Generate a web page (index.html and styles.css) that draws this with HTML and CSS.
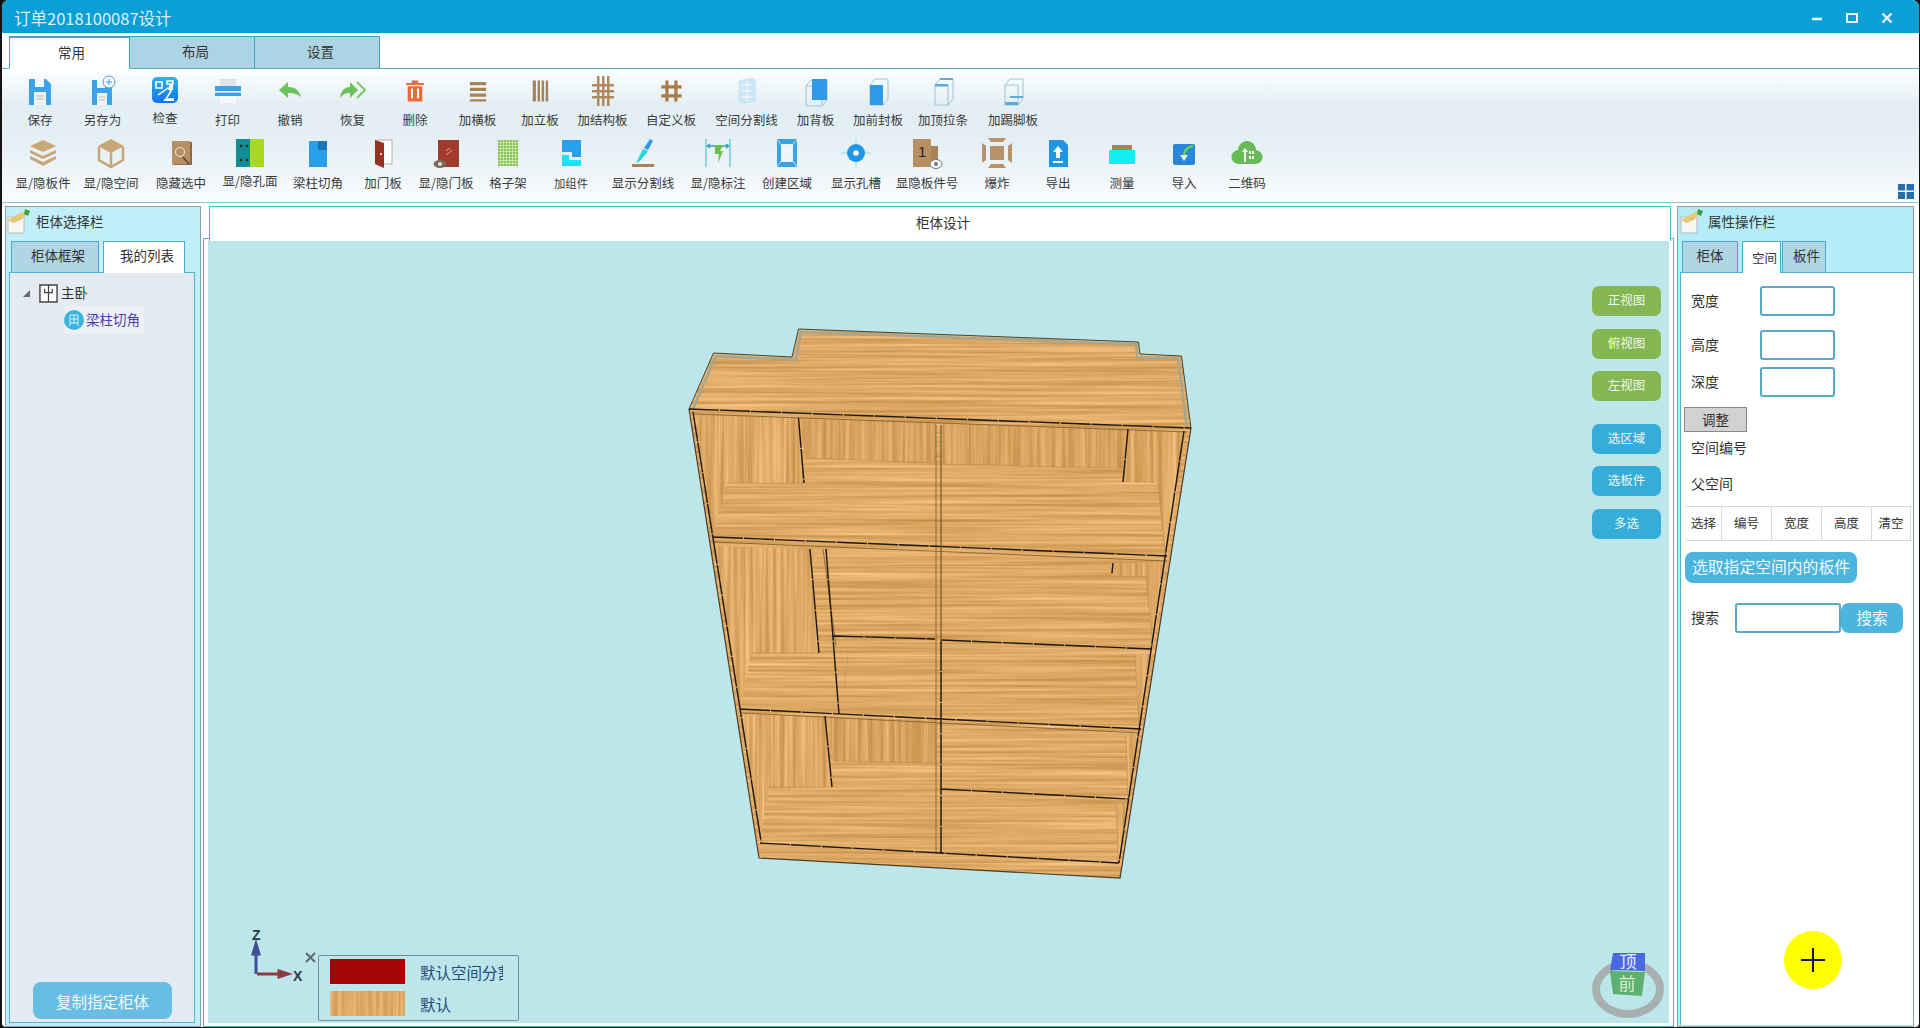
FILE: index.html
```html
<!DOCTYPE html>
<html lang="zh-CN">
<head>
<meta charset="utf-8">
<title>订单2018100087设计</title>
<link rel="stylesheet" href="styles.css">
</head>
<body>
<div class="window">
  <header class="titlebar">
    <span class="title">订单2018100087设计</span>
    <div class="winctl">
      <svg viewBox="0 0 12 12"><path d="M1 7h10" class="wc"/></svg>
      <svg viewBox="0 0 12 12"><path d="M1 2h10v8H1z" class="wc thinw"/></svg>
      <svg viewBox="0 0 12 12"><path d="M1.500 1.500l9 9M10.500 1.500l-9 9" class="wc"/></svg>
    </div>
  </header>
  <nav class="tabbar">
    <div class="mtab active">常用</div>
    <div class="mtab">布局</div>
    <div class="mtab">设置</div>
  </nav>
  <section class="ribbon">
    <div class="toolrow row1">
      <div class="tool"><svg viewBox="0 0 32 32"><path fill="#3aa3ea" d="M5 4h6v8h9V4h2l5 5v21H5z"/><path fill="#f2f2f2" d="M10 17h12v13H10z"/><path stroke="#bbb" d="M12 21h8M12 24h8"/></svg><span>保存</span></div>
      <div class="tool"><svg viewBox="0 0 32 32"><path fill="#3aa3ea" d="M5 5h5v8h8V5h3l4 5v20H5z"/><path fill="#f2f2f2" d="M10 18h10v12H10z"/><path stroke="#bbb" d="M12 22h6M12 25h6"/><circle cx="22" cy="7" r="6" fill="#f4fafd" stroke="#4a9ed0"/><path stroke="#4a9ed0" d="M22 4v6M19 7h6"/></svg><span>另存为</span></div>
      <div class="tool"><svg viewBox="0 0 32 32"><defs><linearGradient id="gchk" x1="0" y1="0" x2="0" y2="1"><stop offset="0" stop-color="#2fb2ee"/><stop offset="1" stop-color="#1273ea"/></linearGradient></defs><rect x="3" y="2" width="26" height="26" rx="5" fill="url(#gchk)"/><path fill="none" stroke="#fff" stroke-width="1.500" d="M7 7h6v6H7zM18 6h6v3h-6zM9 20l10-7 3 3-5 8h8"/><path fill="#fff" d="M20 9h4v6h-4zM15 24h10v2H15z"/></svg><span class="up">检查</span></div>
      <div class="tool"><svg viewBox="0 0 32 32"><path fill="#dfe3e6" d="M8 4h16v8H8z"/><path fill="#3aa3ea" d="M3 11h26v10H3z"/><path fill="#fff" d="M3 16h26v1.500H3z"/><path fill="#f7f8f9" d="M8 21h16v7H8z"/></svg><span>打印</span></div>
      <div class="tool"><svg viewBox="0 0 32 32"><path fill="#6cc35c" d="M5 15l9-8v5c7 0 11 3 13 10-4-3-7-4-13-4v5z"/></svg><span>撤销</span></div>
      <div class="tool"><svg viewBox="0 0 32 32"><path fill="#6cc35c" d="M21 15l-8-8v5C7 12 4 16 3 23c3-4 6-5 10-5v5z"/><path fill="none" stroke="#7ccb68" stroke-width="2" d="M20 7l8 8-8 8"/></svg><span>恢复</span></div>
      <div class="tool sm"><svg viewBox="0 0 32 32"><path fill="#e96a3a" d="M12 3h8v3h7v2.500H5V6h7zM7 10h18v19H7z"/><path fill="#fff" d="M11 13h2.500v12H11zM18.500 13H21v12h-2.500z"/></svg><span>删除</span></div>
      <div class="tool sm"><svg viewBox="0 0 32 32"><path fill="#a68358" d="M6 5h20v4H6zM6 12h20v4H6zM6 19h20v4H6zM6 26h20v3H6z"/></svg><span>加横板</span></div>
      <div class="tool sm"><svg viewBox="0 0 32 32"><path fill="#a68358" d="M7 3h4v26H7zM13 3h3v26h-3zM18 3h3v26h-3zM23 3h3v26h-3z"/></svg><span>加立板</span></div>
      <div class="tool"><svg viewBox="0 0 32 32"><path fill="#ae8a5e" d="M10 1h2.500v30H10zM15 1h2.500v30H15zM20 1h2.500v30H20zM5 9h22v2.500H5zM5 15h22v2.500H5zM5 21h22v2.500H5z"/></svg><span>加结构板</span></div>
      <div class="tool sm"><svg viewBox="0 0 32 32"><path fill="#a97c48" d="M9 3h4v26H9zM20 3h4v26h-4zM4 9h25v4H4zM4 20h25v4H4z"/></svg><span>自定义板</span></div>
      <div class="tool"><svg viewBox="0 0 32 32"><path fill="#cde6f6" d="M8 5l14-2 3 3v21l-15 2-3-3z"/><path fill="none" stroke="#fff" d="M11 10h10M11 16h10M11 22h10M16 6v20"/></svg><span>空间分割线</span></div>
      <div class="tool"><svg viewBox="0 0 32 32"><path fill="none" stroke="#9cc4d8" d="M6 11l5-6h16v20l-5 6H6zM6 11h16v20"/><path fill="#2f9be8" d="M12 4h15v21H12z"/></svg><span>加背板</span></div>
      <div class="tool"><svg viewBox="0 0 32 32"><path fill="none" stroke="#9cc4d8" d="M8 10l5-6h13v20l-5 6H8z"/><path fill="#2f9be8" d="M8 10h13v20H8z"/></svg><span>加前封板</span></div>
      <div class="tool"><svg viewBox="0 0 32 32"><path fill="none" stroke="#9cc4d8" d="M8 10l5-6h13v20l-5 6H8zM8 10h13v20"/><path fill="#5fa9dc" d="M8 9h13v2.500H8zM13 3h13v2H13z"/></svg><span>加顶拉条</span></div>
      <div class="tool"><svg viewBox="0 0 32 32"><path fill="none" stroke="#9cc4d8" d="M8 10l5-6h13v20l-5 6H8zM8 10h13v20"/><path fill="#5fa9dc" d="M8 27h13v3H8zM13 21h13v2H13z"/></svg><span>加踢脚板</span></div>
    </div>
    <div class="toolrow row2">
      <div class="tool"><svg viewBox="0 0 32 32"><path fill="#c7a677" d="M16 3l13 6-13 6-13-6zM3 13l13 6 13-6v3l-13 6-13-6zM3 19l13 6 13-6v3l-13 7-13-7z"/></svg><span>显/隐板件</span></div>
      <div class="tool"><svg viewBox="0 0 32 32"><path fill="#c7a677" d="M16 2l13 7-13 7-13-7z"/><path fill="none" stroke="#c7a677" stroke-width="2.500" d="M4 10v13l12 7 12-7V10M16 16v14"/></svg><span>显/隐空间</span></div>
      <div class="tool"><svg viewBox="0 0 32 32"><path fill="#b88f63" d="M7 4h18v24H7z"/><path fill="#8e6a44" d="M25 5h2v23H9v-1h16z"/><circle cx="15" cy="15" r="4.500" fill="none" stroke="#eee"/><path stroke="#5c4630" stroke-width="1.500" d="M18 20l6 7"/></svg><span>隐藏选中</span></div>
      <div class="tool"><svg viewBox="0 0 32 32"><path fill="#128d96" d="M2 2h16v28H2z"/><path fill="#a8d820" d="M16 2h14v28H16z"/><circle cx="7" cy="9" r="1.300" fill="#222"/><circle cx="13" cy="9" r="1.300" fill="#222"/><circle cx="7" cy="23" r="1.300" fill="#222"/><circle cx="13" cy="23" r="1.300" fill="#222"/></svg><span class="up">显/隐孔面</span></div>
      <div class="tool"><svg viewBox="0 0 32 32"><path fill="#2ba0ea" d="M7 4h9v9h9v17H7z"/><path fill="#1b74b4" d="M16 4h9v9h-9z"/></svg><span>梁柱切角</span></div>
      <div class="tool"><svg viewBox="0 0 32 32"><path fill="#fff" stroke="#b8a8a8" d="M10 3h15v24H10z"/><path fill="#96311f" d="M8 3l9 3v25l-9-4z"/><circle cx="14" cy="17" r="1" fill="#fff"/></svg><span>加门板</span></div>
      <div class="tool"><svg viewBox="0 0 32 32"><path fill="#a13a2f" d="M8 3h21v27H8z"/><path stroke="#e8a090" d="M16 14l4-3M16 18l6-5"/><ellipse cx="10" cy="27" rx="6.500" ry="4" fill="#7a6a58"/><circle cx="10" cy="27" r="2" fill="#ddd"/></svg><span>显/隐门板</span></div>
      <div class="tool"><svg viewBox="0 0 32 32"><defs><pattern id="gridp" width="3" height="3" patternUnits="userSpaceOnUse"><rect width="3" height="3" fill="#d4ecb8"/><rect width="2.200" height="2.200" fill="#84c452"/></pattern></defs><rect x="6" y="3" width="20" height="26" fill="url(#gridp)"/></svg><span>格子架</span></div>
      <div class="tool"><svg viewBox="0 0 32 32"><path fill="#2ba0ea" d="M7 3h19v17h-9v-5H7z"/><path fill="#1fe0f4" d="M7 18h7v5h12v6H7z"/></svg><span class="tiny">加组件</span></div>
      <div class="tool"><svg viewBox="0 0 32 32"><path fill="#2f9be8" d="M23 2l3 2-5 9-4-2z"/><path fill="#20d8d8" d="M16 12l5 2-8 10-4 2z"/><path fill="#a68358" d="M5 27h22v3H5z"/></svg><span>显示分割线</span></div>
      <div class="tool"><svg viewBox="0 0 32 32"><path stroke="#30b8c8" d="M4 2v28M28 2v28"/><path stroke="#30a0c0" stroke-width="1.300" d="M5 9h22M5 9l3-2M5 9l3 2M27 9l-3-2M27 9l-3 2"/><path fill="#66c24a" d="M13 8h8l-3 6 3 0-5 12 1-9-4 0z"/></svg><span>显/隐标注</span></div>
      <div class="tool"><svg viewBox="0 0 32 32"><path fill="#3aa3e4" d="M6 2h20l-4 5H10zM6 30h20l-4-5H10zM6 3l4 5v16l-4 5zM26 3l-4 5v16l4 5z"/><path fill="#eef6fa" d="M11 8h10v16H11z"/></svg><span>创建区域</span></div>
      <div class="tool"><svg viewBox="0 0 32 32"><path stroke="#8fdcf0" d="M16 1v30M1 16h30"/><circle cx="16" cy="16" r="9" fill="#1f96e4"/><circle cx="16" cy="16" r="2.800" fill="#fff"/></svg><span>显示孔槽</span></div>
      <div class="tool"><svg viewBox="0 0 32 32"><path fill="#b88f63" d="M2 2h18v28H2z"/><path fill="#a68358" d="M20 9h7v19h-7z"/><text x="7" y="20" class="num">1</text><ellipse cx="25" cy="27" rx="6" ry="4.500" fill="#f4f6f6" stroke="#777"/><circle cx="25" cy="27" r="2" fill="#777"/></svg><span>显隐板件号</span></div>
      <div class="tool"><svg viewBox="0 0 32 32"><path fill="#b89268" d="M9 9h14v14H9zM7 1h18l-3 4H10zM7 31h18l-3-4H10zM1 6l4 3v14l-4 3zM31 6l-4 3v14l4 3z"/></svg><span>爆炸</span></div>
      <div class="tool"><svg viewBox="0 0 32 32"><path fill="#1f96e4" d="M7 3h14l5 5v22H7z"/><path fill="#fff" d="M16 9l5 6h-3v6h-4v-6h-3zM11 24h10v2H11z"/></svg><span>导出</span></div>
      <div class="tool"><svg viewBox="0 0 32 32"><path fill="#a68358" d="M6 8h20v5H6z"/><path fill="#12eef4" d="M3 13h26v14H3z"/></svg><span>测量</span></div>
      <div class="tool"><svg viewBox="0 0 32 32"><rect x="5" y="7" width="22" height="21" rx="2" fill="#2a86d8"/><path fill="none" stroke="#5fd05a" stroke-width="2.500" d="M25 9c-6 1-9 5-9 11"/><path fill="#e8f8e0" d="M12 18l4 6 4-6z"/></svg><span>导入</span></div>
      <div class="tool"><svg viewBox="0 0 32 32"><path fill="#66bb55" d="M8 27a7 7 0 0 1-1-14 9 9 0 0 1 18 0 7 7 0 0 1-1 14z"/><path fill="#fff" d="M11 15l3-4 3 4h-2v10h-2V15zM18 14h2v3h-2zM21 14h2v3h-2zM18 19h2v3h-2zM21 19h2v3h-2z"/></svg><span>二维码</span></div>
    </div>
    <svg class="expand" viewBox="0 0 16 15"><path fill="#2a6ea8" d="M0 0h7v6.500H0zM8.500 0H16v6.500H8.500zM0 8h7v7H0zM8.500 8H16v7H8.500z"/></svg>
  </section>
  <main class="workspace">
    <aside class="panel left">
      <div class="phead">
        <svg class="picon" viewBox="0 0 24 26"><path fill="#f6f6f2" stroke="#bbb" d="M1 9l16 0v16H1z"/><path fill="#e8c878" d="M1 12l14-8 5 2-6 6-8 3z"/><path fill="#3aa040" d="M18 1l5 2-2 5-4-2z"/></svg>
        <span>柜体选择栏</span>
      </div>
      <div class="ptabs">
        <div class="ptab t-frame">柜体框架</div>
        <div class="ptab on t-mine">我的列表</div>
      </div>
      <div class="pbody leftbody">
        <div class="tree-row">
          <i class="tri"></i>
          <svg class="room" viewBox="0 0 20 20"><path fill="#fff" stroke="#444" stroke-width="1.500" d="M1 1h18v18H1z"/><path stroke="#444" stroke-width="1.300" fill="none" d="M10 1v18M6 5v4h8V5"/></svg>
          <span>主卧</span>
        </div>
        <div class="tree-leaf">
          <svg class="leaf" viewBox="0 0 20 20"><circle cx="10" cy="10" r="10" fill="#3cb4e0"/><path fill="none" stroke="#d8f2fa" d="M6 5h8v8H6zM10 5v8M6 9h8M5 16l2-3M15 16l-2-3"/></svg>
          <span>梁柱切角</span>
        </div>
        <button class="copybtn">复制指定柜体</button>
      </div>
    </aside>

    <section class="center">
      <div class="ctab">柜体设计</div>
      <div class="cbody">
        <div class="canvas">
          <svg class="scene" viewBox="208 240 1461 782">
            <defs>
              <filter id="woodH" x="0" y="0" width="100%" height="100%" color-interpolation-filters="sRGB">
                <feTurbulence type="fractalNoise" baseFrequency="0.005 0.32" numOctaves="3" seed="7"/>
                <feColorMatrix type="matrix" values="0.28 0 0 0 0.73  0.3 0 0 0 0.515  0.34 0 0 0 0.23  0 0 0 0 1"/>
              </filter>
              <filter id="woodV" x="0" y="0" width="100%" height="100%" color-interpolation-filters="sRGB">
                <feTurbulence type="fractalNoise" baseFrequency="0.26 0.005" numOctaves="3" seed="11"/>
                <feColorMatrix type="matrix" values="0.28 0 0 0 0.73  0.3 0 0 0 0.515  0.34 0 0 0 0.23  0 0 0 0 1"/>
              </filter>
              <clipPath id="cAll"><path d="M713.500 352L792 356 798.500 328 1138.500 341 1140 353 1181.500 355 1191 427 1120 877 759 857 689 408z"/></clipPath>
              <clipPath id="cV"><path d="M696 412L798 417 804 482 727 482 713 535zM799 418L936 422 936 462 806 457zM942 422L1128 428 1124 467 942 463zM1128 429L1186 431 1167 555 1165 553 1158 482 1123 481zM716 545L809 548 819 652 751 652 741 707zM742 713L825 715 832 786 769 786 760 840zM826 716L936 719 936 762 833.500 760zM1113 562L1166 563 1153 648 1146 575 1113 575zM1135 653L1153 654 1139 727zM1126 733L1140 734 1128 797zM1116 802L1128 803 1118 862z"/></clipPath>
            </defs>
            <g clip-path="url(#cAll)"><rect x="680" y="320" width="520" height="565" filter="url(#woodH)"/></g>
            <g clip-path="url(#cV)"><rect x="690" y="405" width="500" height="465" filter="url(#woodV)"/></g>
            <path class="shade" d="M799 418L936 422 936 462 806 457zM942 422L1128 428 1124 467 942 463zM826 716L936 719 936 762 833.500 760z"/>
            <path class="shade2" d="M1128 429L1186 431 1167 555 1165 553 1158 482 1123 481z"/>
            <path class="rim" d="M713.500 352L792 356 798.500 328 1138.500 341 1140 353 1181.500 355 1191 427M689 408L713.500 352"/>
            <path class="rimin" d="M693 408L716 355 796 359 801 331 1136 343.500 1137 356 1178 358 1187 427"/>
            <path class="outline" d="M689 408L759 857 1120 877 1191 427"/>
            <path class="thin" d="M693 413L1187 431M714 541L1167 560M742 712L1140 732M936 424V851M823 548L836 645"/>
            <path class="faint" d="M848 652L844 687M1135 653L1139 727M1126 733L1128 797M1116 802L1118 862M1146 575L1153 648M1158 482L1165 553M806 457L936 462M942 463L1124 467M751 652L819 652M727 482L804 482M833.500 760L936 762M769 786L832 786"/>
            <path class="black" d="M689 408L1191 427M693 411L761 840M1184 430L1119 862M713 536L1167 555M740 708L1141 728M760 842L1119 862M941 640V853M798.500 417L804 482M810 548L819 652M826 548L839 713M825 715L832 786M1128 428L1123 481M1113 562L1112 572M833.500 635L935 638M941 639L1152 648M941 788L1129 798"/>
            <path class="brown" d="M941 424V640"/>
            <path class="ring" d="M1596 988a32 25 0 1 0 64 0a32 25 0 1 0-64 0z"/>
            <path class="cube-top" d="M1613 952L1645 952 1645 970 1610 969z"/>
            <path class="cube-front" d="M1610 970L1645 971 1642 995 1613 993z"/>
            <text class="cubet" x="1628" y="967">顶</text>
            <text class="cubet green" x="1627" y="989">前</text>
            <path class="ax-z" d="M256 973V950M253 953L256 943 259 953z"/>
            <path class="ax-x" d="M257 973H285M279 970L288 973 279 976z"/>
            <text class="axl" x="252" y="939">Z</text>
            <text class="axl" x="293" y="980">X</text>
            <path class="xclose" d="M306 952l9 9M315 952l-9 9"/>
          </svg>
          <div class="views">
            <button class="vb green">正视图</button>
            <button class="vb green">俯视图</button>
            <button class="vb green">左视图</button>
            <button class="vb blue first">选区域</button>
            <button class="vb blue">选板件</button>
            <button class="vb blue">多选</button>
          </div>
          <div class="legend">
            <div class="lrow"><i class="sw red"></i><span>默认空间分割线</span></div>
            <div class="lrow"><svg class="sw" viewBox="0 0 75 25"><rect width="75" height="25" filter="url(#woodV)"/></svg><span>默认</span></div>
          </div>
        </div>
      </div>
    </section>

    <aside class="panel right">
      <div class="phead rh">
        <svg class="picon" viewBox="0 0 24 26"><path fill="#f6f6f2" stroke="#bbb" d="M1 9l16 0v16H1z"/><path fill="#e8c878" d="M1 12l14-8 5 2-6 6-8 3z"/><path fill="#3aa040" d="M18 1l5 2-2 5-4-2z"/></svg>
        <span>属性操作栏</span>
      </div>
      <div class="ptabs rt">
        <div class="ptab t-cab">柜体</div>
        <div class="ptab on t-space">空间</div>
        <div class="ptab t-board">板件</div>
      </div>
      <div class="pbody rightbody">
        <div class="field"><label>宽度</label><div class="input"></div></div>
        <div class="field f2"><label>高度</label><div class="input"></div></div>
        <div class="field f3"><label>深度</label><div class="input"></div></div>
        <button class="adjust">调整</button>
        <div class="info i1">空间编号</div>
        <div class="info i2">父空间</div>
        <div class="table">
          <div>选择</div><div>编号</div><div>宽度</div><div>高度</div><div>清空</div>
        </div>
        <button class="pick">选取指定空间内的板件</button>
        <div class="search">
          <label>搜索</label><div class="input sinput"></div><button class="sbtn">搜索</button>
        </div>
      </div>
      <div class="fab"><svg viewBox="0 0 24 24"><path d="M0 12h24M12 0v24" class="plus"/></svg></div>
    </aside>
  </main>
</div>
</body>
</html>
```
FILE: styles.css
```css
* { box-sizing: border-box; }
html, body { margin: 0; height: 100%; }
body {
  background: #141414;
  font-family: "Noto Sans CJK SC", "Noto Sans", sans-serif;
  color: #333;
  overflow: hidden;
}
button { font-family: inherit; border: 0; padding: 0; }

.window {
  margin: 0 1px 0 2px;
  height: 1027px;
  background: #fff;
  display: flex;
  flex-direction: column;
  border-radius: 7px 7px 4px 4px;
  overflow: hidden;
}
.titlebar {
  height: 33px;
  flex: none;
  background: #0c9fd6;
  display: flex;
  align-items: center;
  justify-content: space-between;
  padding: 3px 26px 0 12px;
}
.title { font-size: 16.500px; color: #d8f1fb; line-height: 28px; }
.winctl { display: flex; gap: 23px; }
.winctl svg { width: 12px; height: 12px; display: block; }
.wc { stroke: #e6f6fc; stroke-width: 2.400; fill: none; }
.wc.thinw { stroke-width: 2; }

.tabbar {
  height: 36px;
  flex: none;
  display: flex;
  align-items: flex-end;
  padding: 3px 0 0 7px;
  border-bottom: 1px solid #56abc6;
}
.mtab {
  width: 125px;
  height: 33px;
  margin-bottom: -1px;
  padding-left: 7px;
  background: #acd4e4;
  border: 1px solid #3fa3c8;
  border-bottom-color: #56abc6;
  border-left: 0;
  font-size: 13.500px;
  line-height: 28px;
  text-align: center;
}
.mtab.active {
  width: 121px;
  background: #fff;
  border-left: 1px solid #3fa3c8;
  border-bottom-color: #fff;
  border-top-width: 2px;
  padding-left: 4px;
}

.ribbon {
  position: relative;
  height: 133px;
  flex: none;
  padding: 6px 5px 0 7px;
  background: linear-gradient(#fdfeff 0, #e2eef4 28%, #e6f0f5 60%, #fafcfd 100%);
}
.toolrow { display: grid; }
.row1 { grid-template-columns: 62px 63px 62px 63px 62px 63px 62px 63px 62px 63px 74px 77px 61px 64px 66px 74px; }
.row2 {
  margin-top: 8px;
  grid-template-columns: 68px 68px 72px 66px 70px 60px 66px 58px 68px 76px 74px 64px 74px 68px 72px 50px 78px 46px 80px;
}
.tool {
  display: flex;
  flex-direction: column;
  align-items: center;
  min-width: 0;
}
.tool svg { width: 32px; height: 32px; display: block; flex: none; }
.tool.sm svg { width: 26px; height: 26px; margin: 3px; }
.tool span {
  margin-top: 4px;
  font-size: 12.500px;
  line-height: 18px;
  white-space: nowrap;
  color: #3a3a3a;
}
.row2 .tool span { margin-top: 5px; }
.tool span.up { margin-top: 2px; }
.row2 .tool span.up { margin-top: 3px; }
.tool span.tiny { font-size: 11.300px; }
.num { font-size: 15px; fill: #222; font-family: "Liberation Sans", sans-serif; }
.expand { position: absolute; right: 5px; bottom: 3px; width: 16px; height: 15px; }

.workspace {
  flex: 1;
  min-height: 0;
  display: flex;
  padding: 3px 3px 0 3px;
  border-top: 1px solid #8cc6d8;
}
.panel {
  position: relative;
  background: #c1eff9;
  border: 1px solid #87a0aa;
  display: flex;
  flex-direction: column;
  height: 821px;
}
.panel.left { width: 196px; }
.panel.right { width: 237px; margin-left: 3px; background: #b6ecf8; }
.phead {
  height: 34px;
  flex: none;
  display: flex;
  align-items: center;
  font-size: 13.500px;
  padding: 0 0 7px 1px;
}
.picon { width: 24px; height: 26px; margin-right: 5px; flex: none; }
.phead.rh { padding-left: 2px; }
.phead.rh .picon { margin-right: 4px; }
.ptabs { height: 31px; flex: none; display: flex; padding-left: 5px; }
.ptabs.rt { padding-left: 4px; }
.ptab {
  height: 31px;
  background: #b0d5e4;
  border: 1px solid #4aa8cc;
  border-bottom: 0;
  font-size: 13.500px;
  line-height: 27px;
  text-align: center;
}
.ptab.on { background: #fff; position: relative; z-index: 1; height: 32px; }
.t-frame { width: 88px; padding-left: 6px; }
.t-mine { width: 82px; margin-left: 4px; padding-left: 6px; }
.t-cab { width: 56px; }
.t-space { width: 39px; margin-left: 4px; font-size: 12.500px; padding-left: 6px; line-height: 31px; white-space: nowrap; }
.t-board { width: 44px; margin-left: 1px; padding-left: 5px; white-space: nowrap; }
.pbody { flex: 1; min-height: 0; }

.leftbody {
  margin: 0 5px 3px 3px;
  background: #e4ebf2;
  border: 1px solid #4fb3cf;
  display: flex;
  flex-direction: column;
  padding-top: 9px;
  font-size: 13.500px;
}
.tree-row { display: flex; align-items: center; height: 22px; padding-left: 13px; }
.tree-row span, .tree-leaf span { margin-top: -3px; }
.tri {
  width: 0; height: 0;
  border-left: 7px solid transparent;
  border-bottom: 7px solid #666;
  margin-right: 9px;
}
.room { width: 19px; height: 19px; margin-right: 3px; }
.tree-leaf {
  display: flex;
  align-items: center;
  width: 80px;
  height: 28px;
  margin: 2px 0 0 54px;
  background: #eef0f4;
  color: #4a3fb0;
  white-space: nowrap;
}
.leaf { width: 20px; height: 20px; margin-right: 2px; flex: none; }
.copybtn {
  width: 139px;
  height: 37px;
  margin: auto 0 3px 23px;
  background: #68bde2;
  border-radius: 8px;
  color: #f4fbfe;
  font-size: 15.500px;
}

.center {
  width: 1471px;
  margin-left: 2px;
  display: flex;
  flex-direction: column;
  height: 821px;
}
.ctab {
  position: relative;
  z-index: 1;
  height: 35px;
  flex: none;
  margin: 0 3px 0 6px;
  padding-left: 6px;
  background: #fff;
  border: 1px solid #4fb3cf;
  border-bottom: 0;
  text-align: center;
  font-size: 13.500px;
  line-height: 30px;
}
.cbody {
  flex: 1;
  min-height: 0;
  margin-top: -3px;
  padding: 2px 4px 3px;
  border: 1px solid #4fb3cf;
  background: #fff;
}
.canvas { position: relative; width: 100%; height: 100%; background: #bde6ea; overflow: hidden; }
.scene { position: absolute; inset: 0; width: 1461px; height: 782px; display: block; }

.shade { fill: #a8702a; opacity: .1; }
.shade2 { fill: #a8702a; opacity: .06; }
.rim { fill: none; stroke: #3a4a40; stroke-width: 1; }
.rimin { fill: none; stroke: #a9a68f; stroke-width: 2.500; }
.outline { fill: none; stroke: #4a3c25; stroke-width: 1.200; }
.thin { fill: none; stroke: #8e6a35; stroke-width: 1; }
.faint { fill: none; stroke: #a87c40; stroke-width: 1; opacity: .35; }
.black { fill: none; stroke: #1e150c; stroke-width: 1.400; stroke-dasharray: 30 1; }
.brown { fill: none; stroke: #6e5a2c; stroke-width: 1.200; }
.ring { fill: none; stroke: #a8b0b0; stroke-width: 8; }
.cube-top { fill: #4a68e2; }
.cube-front { fill: #5cb070; }
.cubet { font-size: 17px; fill: #e4eef8; text-anchor: middle; }
.cubet.green { fill: #d8f0d0; }
.ax-z { stroke: #3f4f96; stroke-width: 3; fill: #3f4f96; }
.ax-x { stroke: #8a3a3e; stroke-width: 3; fill: #8a3a3e; }
.axl { font-family: "Liberation Sans", sans-serif; font-size: 14px; fill: #2a3a44; font-weight: 700; }
.xclose { stroke: #5a6a70; stroke-width: 2; fill: none; }

.views {
  position: absolute;
  right: 8px;
  top: 45px;
  display: flex;
  flex-direction: column;
  gap: 12.500px;
}
.vb {
  width: 69px;
  height: 30px;
  padding-bottom: 3px;
  border-radius: 7px;
  font-size: 12.500px;
  color: #eef8f0;
}
.vb.green { background: #84b652; }
.vb.blue { background: #36acd9; }
.vb.first { margin-top: 10px; }

.legend {
  position: absolute;
  left: 110px;
  bottom: 2px;
  width: 201px;
  height: 66px;
  border: 1px solid #6a8ea0;
  border-radius: 2px;
  padding: 3px 0 0 11px;
  display: flex;
  flex-direction: column;
  gap: 7px;
}
.lrow {
  display: flex;
  align-items: center;
  height: 25px;
  font-size: 15.500px;
  color: #1d4a7c;
}
.lrow span { width: 83px; margin-left: 15px; overflow: hidden; white-space: nowrap; }
.sw { width: 75px; height: 25px; display: block; flex: none; }
.sw.red { background: #a30404; }

.rightbody {
  margin: 0 0 1px 2px;
  background: #fff;
  border-top: 1px solid #4fb3cf;
  border-left: 1px solid #4fb3cf;
  font-size: 14px;
  padding-top: 13px;
}
.field { display: flex; align-items: center; height: 30px; padding-left: 10px; }
.field label { width: 69px; margin-top: -3px; }
.f2 { margin-top: 14px; }
.f3 { margin-top: 7px; }
.input {
  width: 75px;
  height: 30px;
  background: #fff;
  border: 2px solid #5aa8c4;
  border-radius: 3px;
}
.adjust {
  display: block;
  width: 63px;
  height: 25px;
  margin: 10px 0 0 3px;
  padding-bottom: 2px;
  background: #d2d2d2;
  border: 1px solid #888;
  font-size: 13.500px;
  color: #333;
}
.info { height: 18px; line-height: 18px; padding-left: 10px; }
.i1 { margin-top: 6px; }
.i2 { margin-top: 18px; }
.table {
  display: grid;
  grid-template-columns: 36px 50px 50px 50px 39px;
  width: 226px;
  height: 35px;
  margin: 14px 0 0 5px;
  border-top: 1px solid #d8d8d8;
  border-bottom: 1px solid #d8d8d8;
  font-size: 12.500px;
  line-height: 31px;
  text-align: center;
}
.table div { border-right: 1px solid #d8d8d8; white-space: nowrap; }
.pick {
  display: block;
  width: 172px;
  height: 31px;
  margin: 11px 0 0 4px;
  padding-bottom: 2px;
  background: #4cb5dd;
  border-radius: 8px;
  color: #eef9fd;
  font-size: 15.800px;
  white-space: nowrap;
}
.search { display: flex; align-items: center; height: 30px; margin-top: 20px; padding-left: 10px; }
.search label { width: 44px; flex: none; margin-top: -3px; }
.sinput { width: 106px; }
.sbtn {
  width: 62px;
  height: 30px;
  padding-bottom: 2px;
  background: #4cb5dd;
  border-radius: 8px;
  color: #eef9fd;
  font-size: 15.800px;
}
.fab {
  position: absolute;
  right: 71px;
  bottom: 37px;
  width: 58px;
  height: 58px;
  border-radius: 50%;
  background: #ffff00;
  display: flex;
  align-items: center;
  justify-content: center;
}
.fab svg { width: 24px; height: 24px; display: block; }
.plus { stroke: #10106e; stroke-width: 2; fill: none; }
```
